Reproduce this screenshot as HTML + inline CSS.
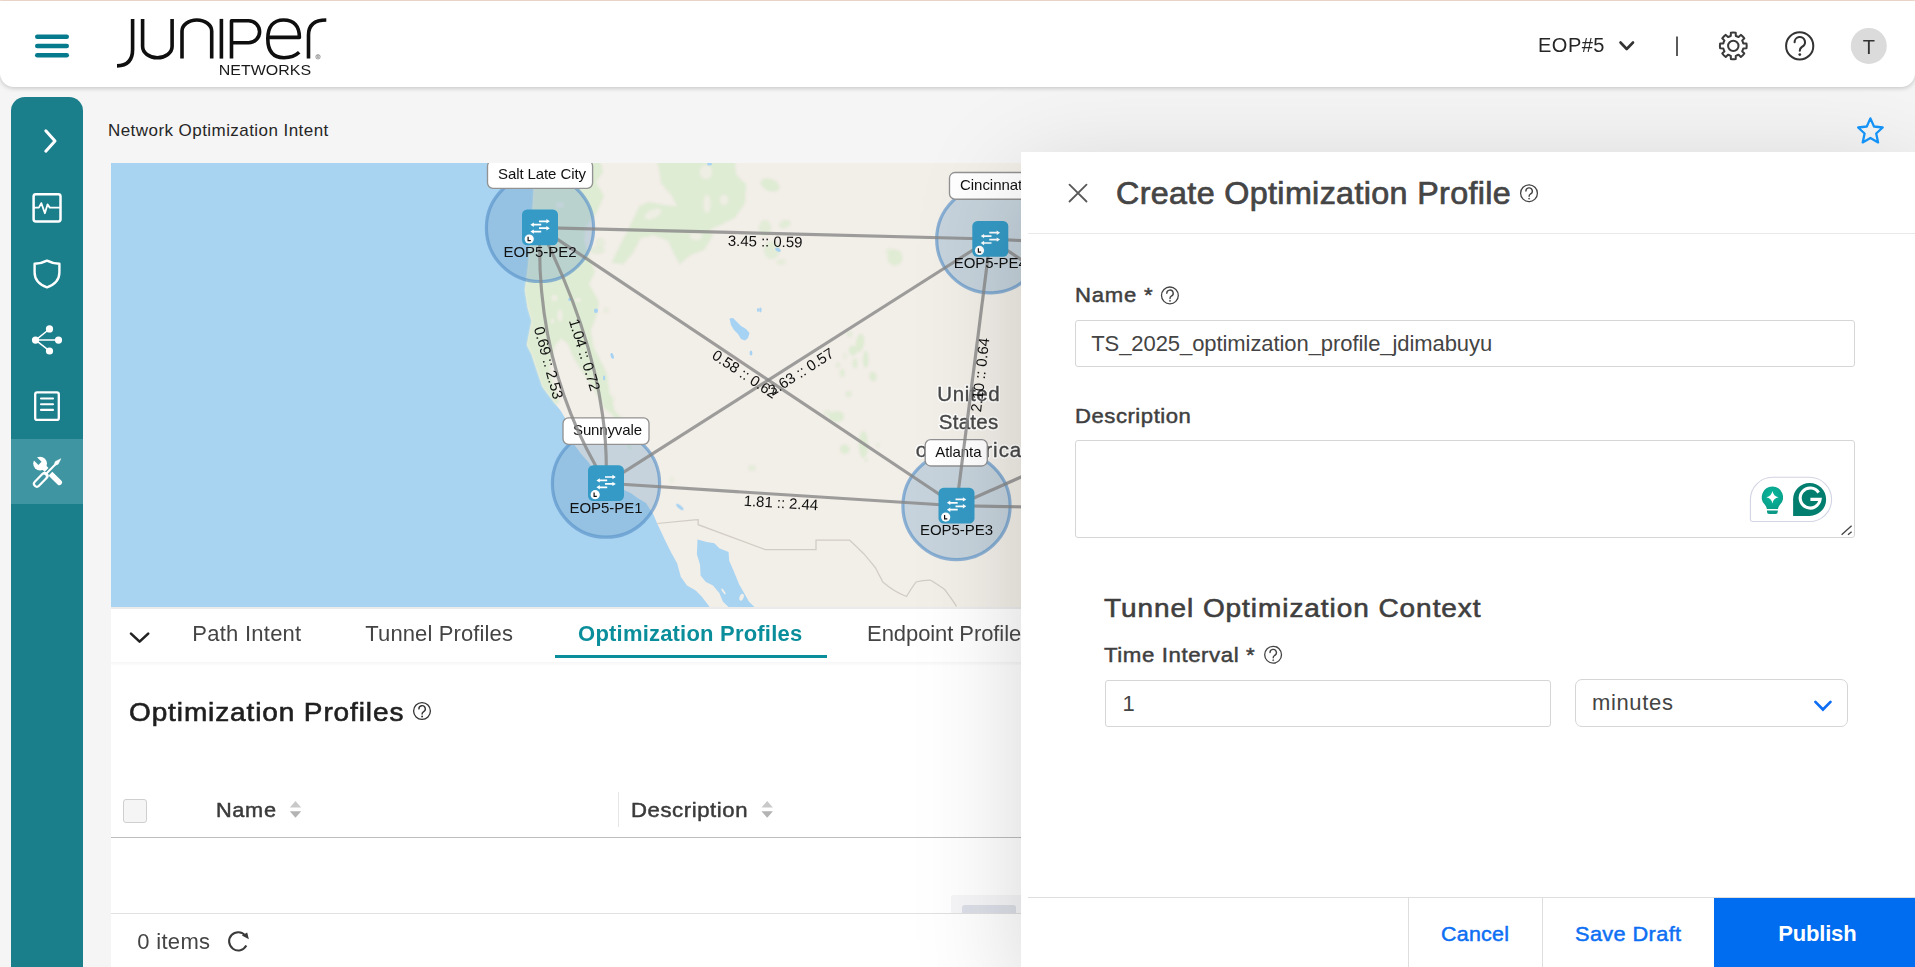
<!DOCTYPE html>
<html lang="en">
<head>
<meta charset="utf-8">
<title>Network Optimization Intent</title>
<style>
*{box-sizing:border-box;margin:0;padding:0}
html,body{width:1915px;height:967px;overflow:hidden;background:#f5f5f5;font-family:"Liberation Sans",sans-serif;}
.abs{position:absolute}
.t{position:absolute;white-space:pre;line-height:1;font-family:"Liberation Sans",sans-serif;}
#topstrip{position:absolute;left:0;top:0;width:1915px;height:1px;background:#f6e1d5}
#header{position:absolute;left:0;top:1px;width:1915px;height:85.5px;background:#fff;border-radius:0 0 14px 14px;box-shadow:0 1px 5px rgba(0,0,0,.22)}
#sidebar{position:absolute;left:11px;top:97px;width:72px;height:880px;background:#1b7e8b;border-radius:14px 14px 0 0}
#sidebar .active{position:absolute;left:0;top:342px;width:72px;height:65.4px;background:#3f95a1}
#mapwrap{position:absolute;left:111px;top:163px;width:912px;height:443.5px;overflow:hidden;background:#a8d4f2}
#card{position:absolute;left:111px;top:608.5px;width:912px;height:360px;background:#fff}
#mapline{position:absolute;left:111px;top:606.5px;width:912px;height:2px;background:#ebebeb}
#tabline{position:absolute;left:111px;top:662px;width:912px;height:3px;background:linear-gradient(#f6f6f6,#fcfcfc)}
#tabul{position:absolute;left:555px;top:655px;width:271.7px;height:3.2px;background:#0b8e9b}
#chk{position:absolute;left:123.3px;top:799.2px;width:23.4px;height:23.5px;border:1px solid #cfcfcf;border-radius:3px;background:#f5f5f5}
#coldiv{position:absolute;left:618px;top:792px;width:1px;height:35px;background:#e6e6e6}
#thline{position:absolute;left:111px;top:836.7px;width:912px;height:1.3px;background:#bdbdbd}
#ftline{position:absolute;left:111px;top:912.9px;width:912px;height:1.2px;background:#e0e0e0}
#scr1{position:absolute;left:951px;top:895px;width:72px;height:17.6px;background:#f6f6f8;border-radius:3px 0 0 0}
#scr2{position:absolute;left:962px;top:905px;width:53.5px;height:7.6px;background:#dcdfe7;border-radius:2.5px 2.5px 0 0}
#pshad{position:absolute;left:1020.7px;top:151.8px;width:900px;height:830px;box-shadow:0 25px 100px rgba(0,0,0,.17)}
#panel{position:absolute;left:1020.7px;top:151.8px;width:895px;height:816px;background:#fff}
#phline{position:absolute;left:1028px;top:232.7px;width:887px;height:1px;background:#e9e9e9}
#pfline{position:absolute;left:1028px;top:896.8px;width:887px;height:1.2px;background:#dedede}
.inp{position:absolute;background:#fff;border:1.2px solid #d6d6d6;border-radius:3px}
#div1{position:absolute;left:1407.8px;top:898px;width:1px;height:69px;background:#dedede}
#div2{position:absolute;left:1542.2px;top:898px;width:1px;height:69px;background:#dedede}
#publish{position:absolute;left:1714px;top:898px;width:201px;height:69px;background:#006df0}
</style>
</head>
<body>
<div id="topstrip"></div>

<!-- MAP -->
<div id="mapwrap">
<svg width="912" height="443.5" viewBox="111 163 912 443.5" style="position:absolute;left:0;top:0;display:block" font-family="Liberation Sans, sans-serif">
<defs><filter id="bl" x="-10%" y="-10%" width="120%" height="120%"><feGaussianBlur stdDeviation="1.1"/></filter><filter id="bl2"><feGaussianBlur stdDeviation="0.6"/></filter></defs>
<rect x="111" y="163" width="912" height="444" fill="#a8d4f2"/>
<g filter="url(#bl2)"><polygon fill="#f2eee8" points="534,160 533.5,192 531,234 527.5,270 524.8,290 527.5,307.5 531.5,321 528.8,334.4 526.8,345 531.5,354.5 536.9,370.7 542.3,386.8 550.3,397.6 556,405 560.5,410.5 565,418 570,430 574.8,445.5 581,453.8 588.3,462 591.4,466.2 600,474 614,483 624,490 630.7,493 637.9,498.2 646,503 653.5,514.8 657.2,523.5 664.7,539.6 670.9,552 677.1,563.2 680.8,576.8 687,585.5 695.7,590.5 701.9,596.7 709.3,606.6 712,610 1030,610 1030,160"/>
<polygon fill="#a8d4f2" points="697.5,539.6 706.8,542.1 714.3,543.3 719.3,548.3 728.6,552 729.2,560.7 734.1,571.9 739.1,584.3 744.1,593 749,601.7 754,606.6 757,611 730,611 728,606.6 723,601.7 719.3,593 713,585.5 705.6,581.8 700.6,575.6 700,564.4 696.9,554.5"/>
<ellipse cx="741.6" cy="597.3" rx="2" ry="3.6" fill="#f2eee8" transform="rotate(20 741.6 597.3)"/><ellipse cx="723.5" cy="591.5" rx="1" ry="3.4" fill="#f2eee8" transform="rotate(-35 723.5 591.5)"/></g>
<g fill="#dcebd0" filter="url(#bl)">
<polygon opacity=".92" points="534,160 600,160 603,172 596,182 604,196 596,214 586,226 584,240 589,256 595,272 589,284 598,300 598.8,303.4 596,317 590.7,330.3 593.4,346.5 600,360 606.8,373.4 609.5,392.2 615,411 621.6,417.8 628,436 631.7,449.6 629,449 622,430 612,414 604,408.3 598.8,397.6 590.7,384 580,368 573.2,357.2 567.8,343.8 561,338.4 554.4,346.5 551,360 549.5,372 553,384 558,396 559,403 556,405 550.3,397.6 542.3,386.8 536.9,370.7 531.5,354.5 526.8,345 528.8,334.4 531.5,321 527.5,307.5 524.8,290 527.5,270 531,234 533.5,192"/>
<g fill="#f2eee8" opacity=".8"><ellipse cx="554.4" cy="298" rx="3.2" ry="3"/><ellipse cx="560" cy="315.5" rx="2.6" ry="6"/><ellipse cx="552.5" cy="321" rx="1.8" ry="2.5"/><ellipse cx="590" cy="236" rx="5" ry="8"/><ellipse cx="578" cy="300" rx="3" ry="2"/><ellipse cx="572" cy="250" rx="3" ry="5"/><ellipse cx="560" cy="205" rx="4" ry="3"/></g>
<polygon opacity=".85" points="656.6,160 734.8,160 736.2,174.5 746.3,184.6 744.9,203.4 734.8,217.9 720.3,225.1 710.2,229.5 713,235.3 704.4,249.8 689.9,255.5 679.8,264.2 674,254.1 668.2,241.1 653.7,235.3 640.7,238.2 633.4,252.6 623.3,264.2 611.7,262.8 619,246.9 630.5,225.1 639.2,206.3 647.9,202 665.3,204.9 676.9,206.3 671,194.7 660.9,183.2 659.5,171.6"/>
<g fill="#f2eee8" opacity=".8"><ellipse cx="706" cy="172" rx="6" ry="7"/><ellipse cx="707" cy="204" rx="3.5" ry="9"/><ellipse cx="653" cy="214" rx="9" ry="4" transform="rotate(-25 653 214)"/><ellipse cx="724" cy="200" rx="4" ry="5"/><ellipse cx="696" cy="236" rx="6" ry="4"/></g>
<ellipse cx="770" cy="185" rx="10" ry="6" opacity="0.85" transform="rotate(20 770 185)"/>
<ellipse cx="765" cy="228" rx="6" ry="8" opacity="0.7" transform="rotate(0 765 228)"/>
<ellipse cx="785" cy="224" rx="6" ry="4" opacity="0.7" transform="rotate(-20 785 224)"/>
<ellipse cx="772" cy="250" rx="8" ry="9" opacity="0.7" transform="rotate(10 772 250)"/>
<ellipse cx="781" cy="262" rx="5" ry="3" opacity="0.55" transform="rotate(0 781 262)"/>
<ellipse cx="597" cy="250" rx="8" ry="4" opacity="0.6" transform="rotate(0 597 250)"/>
<ellipse cx="600" cy="243" rx="5" ry="5" opacity="0.5" transform="rotate(0 600 243)"/>
<ellipse cx="860" cy="343" rx="4" ry="9" opacity="0.95" transform="rotate(8 860 343)"/>
<ellipse cx="853" cy="350.5" rx="4.2" ry="5" opacity="0.9" transform="rotate(0 853 350.5)"/>
<ellipse cx="865.7" cy="359.5" rx="2.8" ry="8.5" opacity="0.9" transform="rotate(0 865.7 359.5)"/>
<ellipse cx="855" cy="363.5" rx="2.4" ry="5" opacity="0.8" transform="rotate(0 855 363.5)"/>
<ellipse cx="849.5" cy="334" rx="3" ry="3" opacity="0.6" transform="rotate(0 849.5 334)"/>
<ellipse cx="873" cy="376.5" rx="3.6" ry="5" opacity="0.85" transform="rotate(-15 873 376.5)"/>
<ellipse cx="842.3" cy="373" rx="2.6" ry="4" opacity="0.75" transform="rotate(0 842.3 373)"/>
<ellipse cx="848.5" cy="394" rx="3" ry="3" opacity="0.7" transform="rotate(0 848.5 394)"/>
<ellipse cx="836.5" cy="416.5" rx="7.5" ry="5.5" opacity="0.85" transform="rotate(0 836.5 416.5)"/>
<ellipse cx="827.5" cy="413" rx="4" ry="3" opacity="0.5" transform="rotate(0 827.5 413)"/>
<ellipse cx="863.4" cy="444.5" rx="4.6" ry="13.5" opacity="0.85" transform="rotate(0 863.4 444.5)"/>
<ellipse cx="844.7" cy="449.2" rx="5" ry="4.6" opacity="0.85" transform="rotate(30 844.7 449.2)"/>
<ellipse cx="838" cy="365" rx="2" ry="3" opacity="0.5" transform="rotate(0 838 365)"/>
<ellipse cx="845" cy="356" rx="2" ry="3" opacity="0.4" transform="rotate(0 845 356)"/>
<ellipse cx="895" cy="257.5" rx="7.5" ry="8" opacity="0.8" transform="rotate(0 895 257.5)"/>
<ellipse cx="890" cy="252" rx="4" ry="4" opacity="0.5" transform="rotate(0 890 252)"/>
<ellipse cx="752" cy="468" rx="4" ry="3" opacity="0.6" transform="rotate(0 752 468)"/>
<ellipse cx="611" cy="400" rx="3" ry="5" opacity="0.5" transform="rotate(0 611 400)"/>
<ellipse cx="606" cy="310" rx="3" ry="3" opacity="0.4" transform="rotate(0 606 310)"/>
<ellipse cx="672" cy="480" rx="2" ry="3" opacity="0.4" transform="rotate(0 672 480)"/>
<ellipse cx="866" cy="460" rx="2" ry="2" opacity="0.5" transform="rotate(0 866 460)"/>
<ellipse cx="878" cy="445" rx="2" ry="2" opacity="0.4" transform="rotate(0 878 445)"/>
</g>
<g fill="#a6d2f3" filter="url(#bl2)"><path d="M729.5 318.5 L733 318 L737 322 L741 326 L746 329 L749.5 333 L748 338 L745 340.5 L741 339 L738 334 L734 330 L731 325 Z"/><ellipse cx="760.4" cy="310" rx="1.2" ry="2.4"/><ellipse cx="751" cy="353" rx="1.4" ry="2.6"/><ellipse cx="679.8" cy="507" rx="1.6" ry="4.6" transform="rotate(-50 679.8 507)"/><ellipse cx="596" cy="310.8" rx="2" ry="2.2"/><ellipse cx="612.2" cy="355.9" rx="1.5" ry="3" transform="rotate(-20 612.2 355.9)"/><ellipse cx="569.8" cy="299.4" rx="1.6" ry="1.6"/><ellipse cx="604.1" cy="378" rx="1.1" ry="2.4"/><ellipse cx="758" cy="310" rx="1" ry="2"/><ellipse cx="778" cy="249.7" rx="3" ry="1.8" transform="rotate(30 778 249.7)"/><ellipse cx="709.5" cy="164" rx="2.5" ry="1.5"/></g>
<g fill="none" stroke="#d1cdc5" stroke-width="1.25"><path d="M657.2 523.5 L694.4 519.8 L698.2 519.6 L698.2 524.7 L765.2 549.6 L816 549.6 L816 540 L849.4 540 C856 546 862 552 863.7 553.7 C870 561 874 566 875.6 568 C880 577 882 580 882.8 582 C892 590 900 594 906.5 596.5 C911 589 914 585 916 582 C922 580 927 580 930.3 580 C937 584 941 587 944.6 589.4 C950 597 954 602 956.5 606.5"/></g>
<g font-size="20.5" fill="#fff" stroke="#fff" stroke-width="3.4" stroke-linejoin="round" opacity=".9" text-anchor="middle"><text x="968.5" y="401" textLength="62.5" lengthAdjust="spacing">United</text><text x="968.5" y="428.5" textLength="59.5" lengthAdjust="spacing">States</text><text x="968.5" y="456.5" textLength="105.5" lengthAdjust="spacing">of America</text></g>
<g font-size="20.5" fill="#474747" stroke="#474747" stroke-width=".35" text-anchor="middle"><text x="968.5" y="401" textLength="62.5" lengthAdjust="spacing">United</text><text x="968.5" y="428.5" textLength="59.5" lengthAdjust="spacing">States</text><text x="968.5" y="456.5" textLength="105.5" lengthAdjust="spacing">of America</text></g>
<circle cx="540" cy="227.9" r="53.6" fill="rgba(110,159,199,.335)" stroke="rgba(90,145,200,.66)" stroke-width="3.2"/>
<circle cx="990.3" cy="239.3" r="53.6" fill="rgba(110,159,199,.335)" stroke="rgba(90,145,200,.66)" stroke-width="3.2"/>
<circle cx="606" cy="483.6" r="53.6" fill="rgba(110,159,199,.335)" stroke="rgba(90,145,200,.66)" stroke-width="3.2"/>
<circle cx="956.5" cy="506.0" r="53.6" fill="rgba(110,159,199,.335)" stroke="rgba(90,145,200,.66)" stroke-width="3.2"/>
<rect x="487.5" y="160.5" width="105.10000000000002" height="27.80000000000001" rx="5.5" fill="#fff" stroke="#929292" stroke-width="1.35"/>
<text x="498" y="179.0" font-size="15" fill="#111" textLength="88" lengthAdjust="spacing">Salt Late City</text>
<rect x="563" y="417.9" width="86" height="26.400000000000034" rx="5.5" fill="#fff" stroke="#929292" stroke-width="1.35"/>
<text x="573" y="434.7" font-size="15" fill="#111" textLength="69" lengthAdjust="spacing">Sunnyvale</text>
<rect x="925.2" y="439.6" width="62.09999999999991" height="26.399999999999977" rx="5.5" fill="#fff" stroke="#929292" stroke-width="1.35"/>
<text x="935.2" y="457.2" font-size="15" fill="#111" textLength="46.299999999999955" lengthAdjust="spacing">Atlanta</text>
<rect x="949.5" y="172.5" width="91.5" height="26.69999999999999" rx="5.5" fill="#fff" stroke="#929292" stroke-width="1.35"/>
<text x="960" y="190.4" font-size="15" fill="#111" textLength="65.5" lengthAdjust="spacing">Cincinnati</text>
<g fill="none" stroke="#878787" stroke-opacity=".8" stroke-width="3.15">
<path d="M540 227.6 L990.3 239.0"/>
<path d="M540 227.6 L956.5 505.7"/>
<path d="M606 483.3 L990.3 239.0"/>
<path d="M606 483.3 L956.5 505.7"/>
<path d="M990.3 239.0 L956.5 505.7"/>
<path d="M540 227.6 Q534.5 368 606 483.3"/>
<path d="M540 227.6 Q611 368.5 606 483.3"/>
<path d="M956.5 505.7 L1030 473"/>
<path d="M956.5 505.7 L1030 507"/>
<path d="M990.3 239.0 L1030 241"/>
<path d="M990.3 239.0 L1030 265.6"/>
</g>
<text x="765.2" y="241.2" transform="rotate(1.3 765.2 241.2)" text-anchor="middle" dy="5.4" font-size="15" fill="#111" textLength="74.5" lengthAdjust="spacing">3.45 :: 0.59</text>
<text x="781" y="502.6" transform="rotate(3.6 781 502.6)" text-anchor="middle" dy="5.4" font-size="15" fill="#111" textLength="74.5" lengthAdjust="spacing">1.81 :: 2.44</text>
<text x="744.9" y="374" transform="rotate(33.6 744.9 374)" text-anchor="middle" dy="5.4" font-size="15" fill="#111" textLength="74.5" lengthAdjust="spacing">0.58 :: 0.62</text>
<text x="800.8" y="371.6" transform="rotate(-32.5 800.8 371.6)" text-anchor="middle" dy="5.4" font-size="15" fill="#111" textLength="74.5" lengthAdjust="spacing">2.63 :: 0.57</text>
<text x="979.9" y="374.8" transform="rotate(-83.6 979.9 374.8)" text-anchor="middle" dy="5.4" font-size="15" fill="#111" textLength="74.5" lengthAdjust="spacing">2.10 :: 0.64</text>
<text x="548.9" y="362.7" transform="rotate(74.7 548.9 362.7)" text-anchor="middle" dy="5.4" font-size="15" fill="#111" textLength="74.5" lengthAdjust="spacing">0.69 :: 2.53</text>
<text x="584.9" y="354.8" transform="rotate(72.8 584.9 354.8)" text-anchor="middle" dy="5.4" font-size="15" fill="#111" textLength="74.5" lengthAdjust="spacing">1.04 :: 0.72</text>
<rect x="522.0" y="209.6" width="36" height="35.7" rx="5.2" fill="#359ac5"/>
<g fill="none" stroke="#fff" stroke-width="1.7"><path d="M539 221.29999999999998 h8.4 M539 228.2 h8.4 M533 224.7 h8.2 M533 231.6 h8.2"/></g>
<g fill="#fff"><path d="M546.4 219.1 l3.4 2.2 l-3.4 2.2z M546.4 226.0 l3.4 2.2 l-3.4 2.2z M533.8 222.5 l-3.4 2.2 l3.4 2.2z M533.8 229.4 l-3.4 2.2 l3.4 2.2z"/><circle cx="529.2" cy="239.0" r="4.6"/></g>
<path d="M528.1 236.79999999999998 v3.9 h2.7" fill="none" stroke="#111" stroke-width="1.2"/>
<text x="540" y="256.8" font-size="15" fill="#111" text-anchor="middle" textLength="73.2" lengthAdjust="spacing">EOP5-PE2</text>
<rect x="972.3" y="221.0" width="36" height="35.7" rx="5.2" fill="#359ac5"/>
<g fill="none" stroke="#fff" stroke-width="1.7"><path d="M989.3 232.7 h8.4 M989.3 239.6 h8.4 M983.3 236.1 h8.2 M983.3 243.0 h8.2"/></g>
<g fill="#fff"><path d="M996.6999999999999 230.5 l3.4 2.2 l-3.4 2.2z M996.6999999999999 237.4 l3.4 2.2 l-3.4 2.2z M984.0999999999999 233.9 l-3.4 2.2 l3.4 2.2z M984.0999999999999 240.8 l-3.4 2.2 l3.4 2.2z"/><circle cx="979.5" cy="250.4" r="4.6"/></g>
<path d="M978.4 248.2 v3.9 h2.7" fill="none" stroke="#111" stroke-width="1.2"/>
<text x="990.3" y="268.2" font-size="15" fill="#111" text-anchor="middle" textLength="73.2" lengthAdjust="spacing">EOP5-PE4</text>
<rect x="588.0" y="465.3" width="36" height="35.7" rx="5.2" fill="#359ac5"/>
<g fill="none" stroke="#fff" stroke-width="1.7"><path d="M605 477.0 h8.4 M605 483.90000000000003 h8.4 M599 480.40000000000003 h8.2 M599 487.3 h8.2"/></g>
<g fill="#fff"><path d="M612.4 474.8 l3.4 2.2 l-3.4 2.2z M612.4 481.7 l3.4 2.2 l-3.4 2.2z M599.8 478.2 l-3.4 2.2 l3.4 2.2z M599.8 485.1 l-3.4 2.2 l3.4 2.2z"/><circle cx="595.2" cy="494.7" r="4.6"/></g>
<path d="M594.1 492.5 v3.9 h2.7" fill="none" stroke="#111" stroke-width="1.2"/>
<text x="606" y="512.5" font-size="15" fill="#111" text-anchor="middle" textLength="73.2" lengthAdjust="spacing">EOP5-PE1</text>
<rect x="938.5" y="487.7" width="36" height="35.7" rx="5.2" fill="#359ac5"/>
<g fill="none" stroke="#fff" stroke-width="1.7"><path d="M955.5 499.4 h8.4 M955.5 506.3 h8.4 M949.5 502.8 h8.2 M949.5 509.7 h8.2"/></g>
<g fill="#fff"><path d="M962.9 497.2 l3.4 2.2 l-3.4 2.2z M962.9 504.09999999999997 l3.4 2.2 l-3.4 2.2z M950.3 500.59999999999997 l-3.4 2.2 l3.4 2.2z M950.3 507.5 l-3.4 2.2 l3.4 2.2z"/><circle cx="945.7" cy="517.1" r="4.6"/></g>
<path d="M944.6 514.9 v3.9 h2.7" fill="none" stroke="#111" stroke-width="1.2"/>
<text x="956.5" y="534.9" font-size="15" fill="#111" text-anchor="middle" textLength="73.2" lengthAdjust="spacing">EOP5-PE3</text>
</svg>
</div>
<div id="mapline"></div>

<!-- lower card -->
<div id="card"></div>
<div id="tabline"></div>
<div id="tabul"></div>
<div id="chk"></div>
<div id="coldiv"></div>
<div id="thline"></div>
<div id="scr1"></div><div id="scr2"></div>
<div id="ftline"></div>

<div id="pshad"></div>
<!-- header -->
<div id="header"></div>
<svg class="abs" style="left:0;top:0" width="1915" height="100" viewBox="0 0 1915 100">
  <!-- hamburger -->
  <g stroke="#067b8d" stroke-width="4.4" stroke-linecap="round">
    <line x1="37.2" y1="36.7" x2="66.8" y2="36.7"/><line x1="37.2" y1="46" x2="66.8" y2="46"/><line x1="37.2" y1="55.3" x2="66.8" y2="55.3"/>
  </g>
  <!-- juniper logo -->
  <g fill="none" stroke="#0f0f0f" stroke-width="3.6" stroke-linejoin="round">
    <path d="M132.6 18.9 V49.5 Q132.6 65.6 117 65.9"/>
    <path d="M142.6 18.9 V46.6 A14.75 11.1 0 0 0 172.1 46.6 V18.9"/>
    <path d="M182 58.6 V31.1 A14.85 11.1 0 0 1 211.7 31.1 V58.6"/>
    <path d="M221.4 18.9 V58.6"/>
    <path d="M231.5 58.6 V20.7 H248.6 A11 11 0 0 1 248.6 42.7 H231.5"/>
    <path d="M267.8 37.4 H299.4 C299.4 26 294 20 283.6 20 C273 20 267.8 27 267.8 38.8 C267.8 51 273 57.7 284 57.7 C290.5 57.7 295.3 56 299.2 52.3"/>
    <path d="M308.5 58.6 V35 Q308.5 20 326.3 20"/>
  </g>
  <circle cx="318" cy="56.8" r="2.2" fill="none" stroke="#555" stroke-width=".55"/><path d="M317.2 58 V55.6 H318.2 Q319 55.6 319 56.3 Q319 57 318.2 57 H317.2 M318.3 57 L319 58" fill="none" stroke="#555" stroke-width=".45"/>
  <text x="218.8" y="74.9" font-family="Liberation Sans, sans-serif" font-size="15.1" fill="#1a1a1a" textLength="92.3" lengthAdjust="spacingAndGlyphs">NETWORKS</text>
  <!-- EOP chevron -->
  <path d="M1620.5 42.5 L1626.7 49 L1633 42.5" fill="none" stroke="#333" stroke-width="2.6" stroke-linecap="round" stroke-linejoin="round"/>
  <line x1="1677" y1="36.5" x2="1677" y2="56" stroke="#333" stroke-width="1.6"/>
  <!-- gear -->
  <g transform="translate(1733.3 45.9)" fill="none" stroke="#3a3a3a" stroke-width="2">
    <path d="M9.99 -2.49 L13.18 -2.44 A13.4 13.4 0 0 1 13.18 2.44 L9.99 2.49 A10.3 10.3 0 0 1 8.83 5.30 L11.04 7.59 A13.4 13.4 0 0 1 7.59 11.04 L5.30 8.83 A10.3 10.3 0 0 1 2.49 9.99 L2.44 13.18 A13.4 13.4 0 0 1 -2.44 13.18 L-2.49 9.99 A10.3 10.3 0 0 1 -5.30 8.83 L-7.59 11.04 A13.4 13.4 0 0 1 -11.04 7.59 L-8.83 5.30 A10.3 10.3 0 0 1 -9.99 2.49 L-13.18 2.44 A13.4 13.4 0 0 1 -13.18 -2.44 L-9.99 -2.49 A10.3 10.3 0 0 1 -8.83 -5.30 L-11.04 -7.59 A13.4 13.4 0 0 1 -7.59 -11.04 L-5.30 -8.83 A10.3 10.3 0 0 1 -2.49 -9.99 L-2.44 -13.18 A13.4 13.4 0 0 1 2.44 -13.18 L2.49 -9.99 A10.3 10.3 0 0 1 5.30 -8.83 L7.59 -11.04 A13.4 13.4 0 0 1 11.04 -7.59 L8.83 -5.30 A10.3 10.3 0 0 1 9.99 -2.49Z" stroke-linejoin="round"/>
    <circle r="5.2"/>
  </g>
  <!-- help -->
  <circle cx="1799.7" cy="45.9" r="13.6" fill="none" stroke="#333" stroke-width="2"/>
  <path d="M1794.6 42.3 A5.2 5.2 0 1 1 1801.8 47 Q1799.8 48.2 1799.8 50.8" fill="none" stroke="#333" stroke-width="2.1" stroke-linecap="round"/>
  <circle cx="1799.8" cy="54.6" r="1.4" fill="#333"/>
  <!-- avatar -->
  <circle cx="1868.8" cy="45.9" r="18" fill="#dbdbdb"/>
</svg>

<!-- star -->
<svg class="abs" style="left:1855px;top:115px" width="32" height="32" viewBox="0 0 32 32">
  <path d="M15.4 3.4 L19 11.5 L27.7 12.5 L21.2 18.5 L23.1 27.4 L15.4 22.9 L7.7 27.4 L9.6 18.5 L3.1 12.5 L11.8 11.5 Z" fill="none" stroke="#1492f6" stroke-width="2.3" stroke-linejoin="round"/>
</svg>

<!-- sidebar -->
<div id="sidebar"><div class="active"></div></div>
<svg class="abs" style="left:11px;top:97px" width="72" height="420" viewBox="11 97 72 420" fill="none" stroke="#fff" stroke-linecap="round" stroke-linejoin="round">
  <path d="M45.8 130.8 L55 141 L45.8 151.2" stroke-width="3"/>
  <!-- monitor -->
  <rect x="33.6" y="194.3" width="26.9" height="27.2" rx="2.2" stroke-width="2.5"/>
  <path d="M34 207.6 H38.9 L41.3 203.1 L44.9 213.2 L47.5 204.4 L49.8 207.6 H60.4" stroke-width="1.8"/>
  <!-- shield -->
  <path d="M47 260.6 C42.5 263 38.5 263.6 34.6 263.8 V272.5 C34.6 280 40 284.8 47 287.4 C54 284.8 59.4 280 59.4 272.5 V263.8 C55.5 263.6 51.5 263 47 260.6 Z" stroke-width="2.4"/>
  <!-- share nodes -->
  <g stroke-width="1.5"><path d="M35.6 340.1 L49.5 329 M35.6 340.1 H58 M35.6 340.1 L49.5 350.9"/></g>
  <g fill="#fff" stroke="none"><circle cx="35.5" cy="340.1" r="3.6"/><circle cx="49.5" cy="328.9" r="3.6"/><circle cx="58.5" cy="340.1" r="3.6"/><circle cx="49.5" cy="351" r="3.6"/></g>
  <!-- doc -->
  <rect x="35.2" y="392.3" width="23.6" height="27.6" rx="2" stroke-width="2.3"/>
  <path d="M41 398.5 H53 M41 404.2 H53 M41 409.9 H53" stroke-width="2.1"/>
  <!-- tools -->
  <g id="tools">
    <line x1="40.1" y1="463.5" x2="59.4" y2="482.5" stroke-width="5.3" stroke-linecap="round"/>
    <circle cx="40.1" cy="463.6" r="6.9" fill="#fff" stroke="none"/>
    <rect x="-2.2" y="-12" width="4.4" height="12.4" transform="translate(39.7 463.1) rotate(-45)" fill="#3f95a1" stroke="none"/>
    <line x1="42.3" y1="478.1" x2="53.8" y2="466.4" stroke="#3f95a1" stroke-width="5.4" stroke-linecap="butt"/>
    <line x1="45.2" y1="474.8" x2="56" y2="463.8" stroke-width="2" stroke-linecap="butt"/>
    <path d="M56 465 L58.1 464.3 L60.9 458.7 L55.3 461.5 L54.6 463.6 Z" fill="#fff" stroke="#fff" stroke-width=".5" stroke-linejoin="round"/>
    <line x1="36.9" y1="483.7" x2="44.6" y2="475.9" stroke-width="8" stroke-linecap="round"/>
    <line x1="36.9" y1="483.7" x2="44" y2="476.5" stroke="#3f95a1" stroke-width="3.7" stroke-linecap="round"/>
  </g>
</svg>

<!-- lower card icons -->
<svg class="abs" style="left:111px;top:608px" width="912" height="359" viewBox="111 608 912 359" fill="none">
  <path d="M131 633.6 L139.6 641.6 L148.2 633.6" stroke="#222" stroke-width="2.6" stroke-linecap="round" stroke-linejoin="round"/>
  <!-- help icon -->
  <g stroke="#333"><circle cx="422" cy="711" r="8.4" stroke-width="1.3"/>
  <path d="M418.9 708.9 A3.2 3.2 0 1 1 423.4 711.8 Q422.1 712.6 422.1 714.1" stroke-width="1.4" stroke-linecap="round"/></g><circle cx="422.1" cy="716.5" r=".95" fill="#333"/>
  <!-- sort arrows -->
  <path d="M289.8 807.6 L295.5 801 L301.2 807.6 Z" fill="#c9c9c9"/><path d="M289.8 811.3 L295.5 817.8 L301.2 811.3 Z" fill="#b3b3b3"/>
  <path d="M761.5 807.6 L767.2 801 L772.9 807.6 Z" fill="#c9c9c9"/><path d="M761.5 811.3 L767.2 817.8 L772.9 811.3 Z" fill="#b3b3b3"/>
  <!-- refresh -->
  <path d="M245.3 935.6 A9.1 9.1 0 1 0 246.3 945.5" stroke="#3a3a3a" stroke-width="2.1" stroke-linecap="butt"/>
  <path d="M241.9 935.6 L247.2 932.4 L248.9 939.3 Z" fill="#3a3a3a"/>
</svg>

<span class="t" style="left:108.0px;top:122px;font-size:17px;font-weight:400;color:#262626;letter-spacing:0.44px;">Network Optimization Intent</span>
<span class="t" style="left:192.3px;top:623px;font-size:22px;font-weight:400;color:#444;letter-spacing:0.25px;">Path Intent</span>
<span class="t" style="left:365.3px;top:623px;font-size:22px;font-weight:400;color:#444;letter-spacing:0.12px;">Tunnel Profiles</span>
<span class="t" style="left:578.1px;top:623px;font-size:22px;font-weight:700;color:#0b8e9b;letter-spacing:0.20px;">Optimization Profiles</span>
<span class="t" style="left:867.1px;top:623px;font-size:22px;font-weight:400;color:#444;letter-spacing:-0.08px;">Endpoint Profiles</span>
<span class="t" style="left:129.0px;top:699px;font-size:26px;font-weight:400;color:#1f1f1f;letter-spacing:0.83px;-webkit-text-stroke:0.60px #1f1f1f;transform:scaleX(1.076);transform-origin:0 50%;">Optimization Profiles</span>
<span class="t" style="left:215.9px;top:799px;font-size:21px;font-weight:400;color:#3a3a3a;letter-spacing:0.63px;-webkit-text-stroke:0.48px #3a3a3a;transform:scaleX(1.036);transform-origin:0 50%;">Name</span>
<span class="t" style="left:630.8px;top:799px;font-size:21px;font-weight:400;color:#3a3a3a;letter-spacing:0.54px;-webkit-text-stroke:0.48px #3a3a3a;transform:scaleX(1.055);transform-origin:0 50%;">Description</span>
<span class="t" style="left:137.2px;top:931px;font-size:22px;font-weight:400;color:#444;letter-spacing:0.33px;">0 items</span>

<!-- right panel -->
<div id="panel"></div>
<div id="phline"></div>
<div id="pfline"></div>
<div class="inp" style="left:1074.7px;top:320px;width:780.6px;height:46.8px"></div>
<div class="inp" style="left:1074.7px;top:439.8px;width:780.6px;height:98px"></div>
<div class="inp" style="left:1104.6px;top:679.8px;width:446.6px;height:46.8px"></div>
<div class="inp" style="left:1574.9px;top:678.8px;width:273.2px;height:48.2px;border-radius:7px"></div>
<div id="div1"></div><div id="div2"></div>
<div id="publish"></div>
<svg class="abs" style="left:1021px;top:152px" width="894" height="815" viewBox="1021 152 894 815" fill="none">
  <path d="M1069.5 184.7 L1086.5 201.5 M1086.5 184.7 L1069.5 201.5" stroke="#595959" stroke-width="1.8" stroke-linecap="round"/>
  <g stroke="#444">
   <g id="h1"><circle cx="1529" cy="193.2" r="8.4" stroke-width="1.3"/><path d="M1525.9 191.1 A3.2 3.2 0 1 1 1530.4 194 Q1529.1 194.8 1529.1 196.3" stroke-width="1.4" stroke-linecap="round"/><circle cx="1529.1" cy="198.7" r=".5" stroke-width="1"/></g>
   <g transform="translate(-359.1 102.2)"><circle cx="1529" cy="193.2" r="8.4" stroke-width="1.3"/><path d="M1525.9 191.1 A3.2 3.2 0 1 1 1530.4 194 Q1529.1 194.8 1529.1 196.3" stroke-width="1.4" stroke-linecap="round"/><circle cx="1529.1" cy="198.7" r=".5" stroke-width="1"/></g>
   <g transform="translate(-255.9 461.5)"><circle cx="1529" cy="193.2" r="8.4" stroke-width="1.3"/><path d="M1525.9 191.1 A3.2 3.2 0 1 1 1530.4 194 Q1529.1 194.8 1529.1 196.3" stroke-width="1.4" stroke-linecap="round"/><circle cx="1529.1" cy="198.7" r=".5" stroke-width="1"/></g>
  </g>
  <!-- select chevron -->
  <path d="M1815.4 701.9 L1822.95 709.5 L1830.5 701.9" stroke="#0d6df3" stroke-width="2.7" stroke-linecap="round" stroke-linejoin="miter"/>
  <!-- resize handle -->
  <path d="M1841.6 534.8 L1851.6 525.8 M1848 534.8 L1851.6 531.7" stroke="#444" stroke-width="1.3"/>
  <!-- grammarly widget -->
  <path d="M1752.3 521.5 Q1750.4 521.5 1750.4 519.6 V499.5 A22.2 22.2 0 0 1 1772.6 477.3 H1809.5 A22.1 22.1 0 0 1 1809.5 521.5 Z" fill="#fff" stroke="#d3d4e4" stroke-width="1.1"/>
  <defs><radialGradient id="gb" cx=".5" cy=".4" r=".7"><stop offset="0" stop-color="#08b89c"/><stop offset="1" stop-color="#0a9a86"/></radialGradient></defs>
  <path d="M1772.4 486.5 A10.7 10.7 0 0 1 1779.9 504.8 Q1778.3 506.6 1777.9 508.9 H1766.9 Q1766.5 506.6 1764.9 504.8 A10.7 10.7 0 0 1 1772.4 486.5 Z" fill="url(#gb)"/>
  <path d="M1767 510.4 H1777.8 V511.8 Q1777.8 514 1775.6 514 H1769.2 Q1767 514 1767 511.8 Z" fill="#0a9a86"/>
  <path d="M1772.4 491 Q1773.4 496.2 1778.5 497.2 Q1773.4 498.2 1772.4 503.4 Q1771.4 498.2 1766.3 497.2 Q1771.4 496.2 1772.4 491 Z" fill="#fff"/>
  <path d="M1793.1 515.9 V499.3 A16.5 16.5 0 1 1 1809.6 515.9 Z" fill="#027e6f"/>
  <path d="M1818.6 492.6 A10 10 0 1 0 1820.1 499.4 H1810.4" stroke="#fff" stroke-width="3.1"/>
</svg>

<span class="t" style="left:1538.0px;top:35px;font-size:20px;font-weight:400;color:#262626;letter-spacing:0.50px;">EOP#5</span>
<span class="t" style="left:1862.7px;top:37px;font-size:20px;font-weight:400;color:#333;letter-spacing:0.00px;">T</span>
<span class="t" style="left:1116.3px;top:178px;font-size:31.5px;font-weight:400;color:#454545;letter-spacing:0.35px;-webkit-text-stroke:0.72px #454545;transform:scaleX(1.024);transform-origin:0 50%;">Create Optimization Profile</span>
<span class="t" style="left:1074.6px;top:284px;font-size:21px;font-weight:400;color:#3f3f3f;letter-spacing:0.72px;-webkit-text-stroke:0.48px #3f3f3f;transform:scaleX(1.053);transform-origin:0 50%;">Name *</span>
<span class="t" style="left:1091.2px;top:333px;font-size:22px;font-weight:400;color:#444;letter-spacing:-0.07px;">TS_2025_optimization_profile_jdimabuyu</span>
<span class="t" style="left:1074.5px;top:405px;font-size:21px;font-weight:400;color:#3f3f3f;letter-spacing:0.51px;-webkit-text-stroke:0.48px #3f3f3f;transform:scaleX(1.052);transform-origin:0 50%;">Description</span>
<span class="t" style="left:1103.8px;top:595px;font-size:26px;font-weight:400;color:#3f3f3f;letter-spacing:0.88px;-webkit-text-stroke:0.60px #3f3f3f;transform:scaleX(1.076);transform-origin:0 50%;">Tunnel Optimization Context</span>
<span class="t" style="left:1104.1px;top:644px;font-size:21px;font-weight:400;color:#3f3f3f;letter-spacing:0.54px;-webkit-text-stroke:0.48px #3f3f3f;transform:scaleX(1.06);transform-origin:0 50%;">Time Interval *</span>
<span class="t" style="left:1122.4px;top:693px;font-size:22px;font-weight:400;color:#444;letter-spacing:0.00px;">1</span>
<span class="t" style="left:1591.9px;top:692px;font-size:22px;font-weight:400;color:#444;letter-spacing:0.66px;">minutes</span>
<span class="t" style="left:1441.3px;top:923px;font-size:21px;font-weight:400;color:#0d6ff3;letter-spacing:0.26px;-webkit-text-stroke:0.48px #0d6ff3;transform:scaleX(1.019);transform-origin:0 50%;">Cancel</span>
<span class="t" style="left:1575.3px;top:923px;font-size:21px;font-weight:400;color:#0d6ff3;letter-spacing:0.37px;-webkit-text-stroke:0.48px #0d6ff3;transform:scaleX(1.035);transform-origin:0 50%;">Save Draft</span>
<span class="t" style="left:1778.3px;top:923px;font-size:22px;font-weight:700;color:#ffffff;letter-spacing:-0.19px;">Publish</span>
</body>
</html>
